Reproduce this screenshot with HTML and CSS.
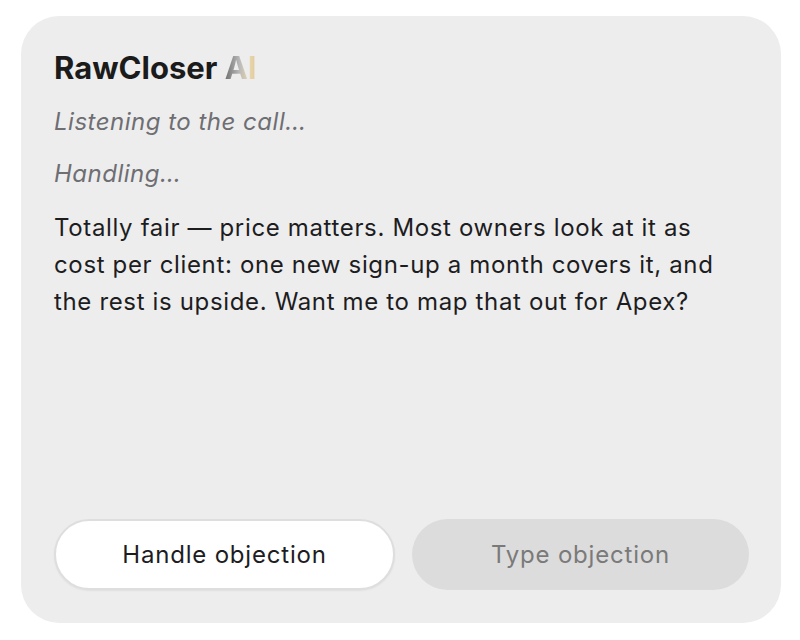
FILE: index.html
```html
<!DOCTYPE html>
<html>
<head>
<meta charset="utf-8">
<link rel="stylesheet" href="styles.css">
</head>
<body>
<div class="card">
  <h1 class="title">RawCloser <span class="ai">AI</span></h1>
  <p class="status">Listening to the call…</p>
  <p class="status">Handling…</p>
  <p class="reply">Totally fair — price matters. Most owners look at it as cost per client: one new sign-up a month covers it, and the rest is upside. Want me to map that out for Apex?</p>
  <div class="actions">
    <button class="btn btn-primary">Handle objection</button>
    <button class="btn btn-muted">Type objection</button>
  </div>
</div>
</body>
</html>
```

FILE: styles.css
```css
* { box-sizing: border-box; }
html, body { margin: 0; background: #ffffff; }
body {
  padding: 16px 19px 17px 21px;
  font-family: Inter, "Noto Sans", "Liberation Sans", sans-serif;
}
.card {
  width: 760px;
  height: 607px;
  background: #ededed;
  border-radius: 38px;
  padding: 32px 32px 33px 33px;
  display: flex;
  flex-direction: column;
}
.title {
  margin: 0;
  font-size: 31px;
  font-weight: 700;
  letter-spacing: 0;
  color: #1b1b1b;
  line-height: 40px;
}
.ai {
  background: linear-gradient(90deg, #6f6f6f 0%, #b9b9b9 45%, #e8d6ad 75%, #e0c999 100%);
  -webkit-background-clip: text;
  background-clip: text;
  color: transparent;
}
.status {
  margin: 19px 0 0;
  font-size: 24px;
  font-style: italic;
  letter-spacing: 0.5px;
  color: #6e6e73;
  line-height: 30px;
}
.status + .status { margin-top: 22px; }
.reply {
  margin: 20px 20px 0 0;
  font-size: 24px;
  letter-spacing: 0.65px;
  line-height: 37px;
  color: #1d1d1f;
}
.actions {
  margin-top: auto;
  display: flex;
  gap: 17px;
}
.btn {
  flex: 1;
  height: 71px;
  border-radius: 36px;
  font-family: inherit;
  font-size: 24px;
  font-weight: 400;
  letter-spacing: 0.8px;
}
.btn-primary {
  background: #ffffff;
  color: #1d1d1f;
  border: 2px solid #dedede;
  box-shadow: 0 1px 2px rgba(0, 0, 0, 0.06);
}
.btn-muted {
  background: #dcdcdc;
  color: #7a7a7a;
  border: none;
}
```
